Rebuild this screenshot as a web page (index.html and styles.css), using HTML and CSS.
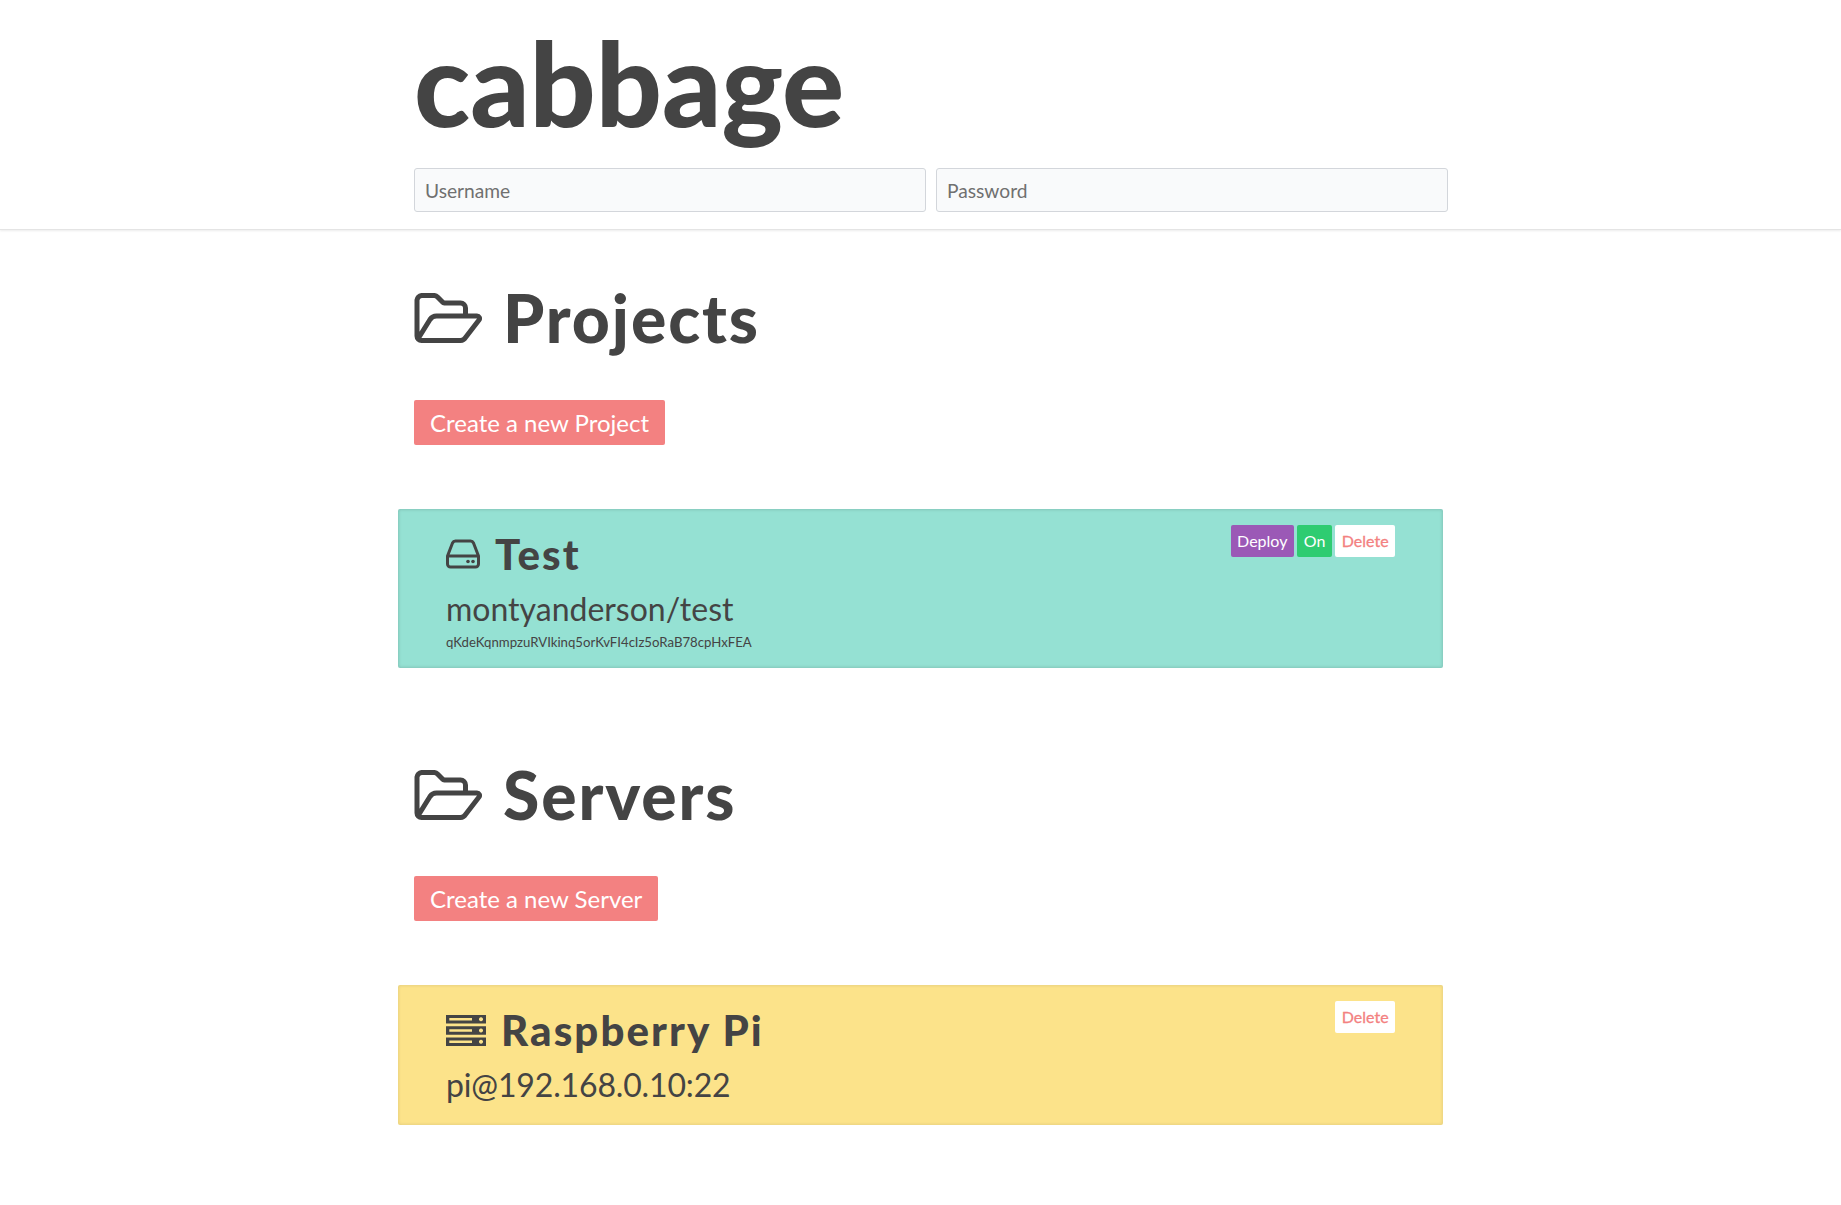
FILE: index.html
```html
<!DOCTYPE html>
<html lang="en">
<head>
<meta charset="utf-8">
<title>cabbage</title>
<link rel="stylesheet" href="styles.css">
</head>
<body>
<header class="site-header">
  <div class="container">
    <h1 class="brand">cabbage</h1>
    <form class="login">
      <input class="field" type="text" placeholder="Username">
      <input class="field" type="password" placeholder="Password">
    </form>
  </div>
</header>
<main class="container">
  <section class="section section-projects">
    <h2 class="section-title">
      <svg class="icon-folder" viewBox="0 0 67 50" aria-hidden="true"><path d="M51 21V15a5 5 0 0 0-5-5H30a3 3 0 0 1-2-1L23 4a5 5 0 0 0-3-1.500H7A5 5 0 0 0 2.500 7V43a4.500 4.500 0 0 0 4.500 4.500H46a6 6 0 0 0 5-3L64.500 27a2.500 2.500 0 0 0-2-4H22a8 8 0 0 0-6.500 3.500L4 45" fill="none" stroke="currentColor" stroke-width="5" stroke-linejoin="round" stroke-linecap="round"/></svg>
      <span>Projects</span>
    </h2>
    <a class="btn-create">Create a new Project</a>
    <article class="card card-project">
      <div class="card-actions">
        <a class="chip chip-deploy">Deploy</a>
        <a class="chip chip-on">On</a>
        <a class="chip chip-delete">Delete</a>
      </div>
      <h3 class="card-title">
        <svg class="icon-hdd" viewBox="0 0 34 30" aria-hidden="true"><path d="M1.500 17V25a3 3 0 0 0 3 3H29.500a3 3 0 0 0 3-3V17L27.500 4a3.500 3.500 0 0 0-3-2H9.500A3.500 3.500 0 0 0 6.500 4L1.500 17H32.500" fill="none" stroke="currentColor" stroke-width="3" stroke-linejoin="round"/><circle cx="27" cy="22.500" r="1.800" fill="currentColor"/><circle cx="22" cy="22.500" r="1.800" fill="currentColor"/></svg>
        <span>Test</span>
      </h3>
      <p class="card-sub">montyanderson/test</p>
      <p class="card-key">qKdeKqnmpzuRVIkinq5orKvFI4cIz5oRaB78cpHxFEA</p>
    </article>
  </section>
  <section class="section section-servers">
    <h2 class="section-title">
      <svg class="icon-folder" viewBox="0 0 67 50" aria-hidden="true"><path d="M51 21V15a5 5 0 0 0-5-5H30a3 3 0 0 1-2-1L23 4a5 5 0 0 0-3-1.500H7A5 5 0 0 0 2.500 7V43a4.500 4.500 0 0 0 4.500 4.500H46a6 6 0 0 0 5-3L64.500 27a2.500 2.500 0 0 0-2-4H22a8 8 0 0 0-6.500 3.500L4 45" fill="none" stroke="currentColor" stroke-width="5" stroke-linejoin="round" stroke-linecap="round"/></svg>
      <span>Servers</span>
    </h2>
    <a class="btn-create">Create a new Server</a>
    <article class="card card-server">
      <div class="card-actions">
        <a class="chip chip-delete">Delete</a>
      </div>
      <h3 class="card-title">
        <svg class="icon-server" viewBox="0 0 40 31" aria-hidden="true"><path fill-rule="evenodd" d="M0 0H40V8.500H0ZM3.300 3V5.500H26V3ZM35 2.250a2 2 0 1 0 .01 0ZM0 11.250H40V19.750H0ZM3.300 14.250V16.750H26V14.250ZM35 13.500a2 2 0 1 0 .01 0ZM0 22.500H40V31H0ZM3.300 25.500V28H26V25.500ZM35 24.750a2 2 0 1 0 .01 0Z" fill="currentColor"/></svg>
        <span>Raspberry Pi</span>
      </h3>
      <p class="card-sub card-sub-host">pi@192.168.0.10:22</p>
    </article>
  </section>
</main>
</body>
</html>
```
FILE: styles.css
```css
* { box-sizing: border-box; }
html, body { margin: 0; padding: 0; background: #fff; }
body { font-family: Lato, sans-serif; color: #444; height: 1205px; overflow: hidden; }
.container { width: 1034px; margin-left: 414px; }
.site-header { height: 230px; border-bottom: 1px solid #e4e4e4; box-shadow: 0 1px 2px rgba(0,0,0,.08); }
.brand { margin: 0 0 2px; font-size: 116px; line-height: 166px; font-weight: 900; }
.login { display: flex; gap: 10px; }
.field { flex: 1; min-width: 0; height: 44px; padding: 0 10px; font: 19.200px Lato, sans-serif; color: #444; background: #f9fafb; border: 1px solid #d3d6db; border-radius: 3px; outline: 0; }
.field::placeholder { color: #707070; opacity: 1; }
.section-title { display: flex; align-items: center; gap: 21px; margin: 0; height: 96px; font-size: 66px; line-height: 96px; font-weight: 900; letter-spacing: 1.900px; }
.section-projects { padding-top: 40px; }
.section-servers { padding-top: 79px; }
.section-servers .btn-create { margin-top: 33px; }
.icon-folder { width: 68px; height: 50px; flex: none; }
.btn-create { display: inline-block; margin-top: 34px; padding: 0 16px; height: 45px; line-height: 45px; font-size: 24px; color: #fff; background: #f38181; border-radius: 2px; }
.card { position: relative; width: 1045px; margin-left: -16px; margin-top: 64px; border-radius: 2px; }
.card-project { height: 159px; padding: 21px 48px 0; background: #95e1d3; box-shadow: inset 0 0 3px 1px rgba(0,0,0,.12); }
.card-server { height: 140px; padding: 21px 48px 0; background: #fce38a; box-shadow: inset 0 0 3px 1px rgba(0,0,0,.08); }
.card-actions { position: absolute; top: 16px; right: 48px; display: flex; gap: 3px; }
.chip { display: block; height: 32px; line-height: 32px; padding: 0 6.400px; font-size: 16px; border-radius: 2px; color: #fff; }
.chip-deploy { background: #9b59b6; }
.chip-on { padding: 0 7px; background: #2ecc71; }
.chip-delete { background: #fff; color: #f38181; -webkit-text-stroke: .3px #f38181; }
.card-title { display: flex; align-items: center; gap: 15px; margin: 0; height: 48px; font-size: 42px; line-height: 48px; font-weight: 900; letter-spacing: 2.100px; }
.icon-hdd { width: 34px; height: 30px; flex: none; }
.icon-server { width: 40px; height: 31px; flex: none; }
.card-sub { margin: 7px 0 0; font-size: 32px; line-height: 48px; }
.card-sub-host { letter-spacing: -.15px; }
.card-key { margin: -1px 0 0; font-size: 13.200px; line-height: 20px; }
```
